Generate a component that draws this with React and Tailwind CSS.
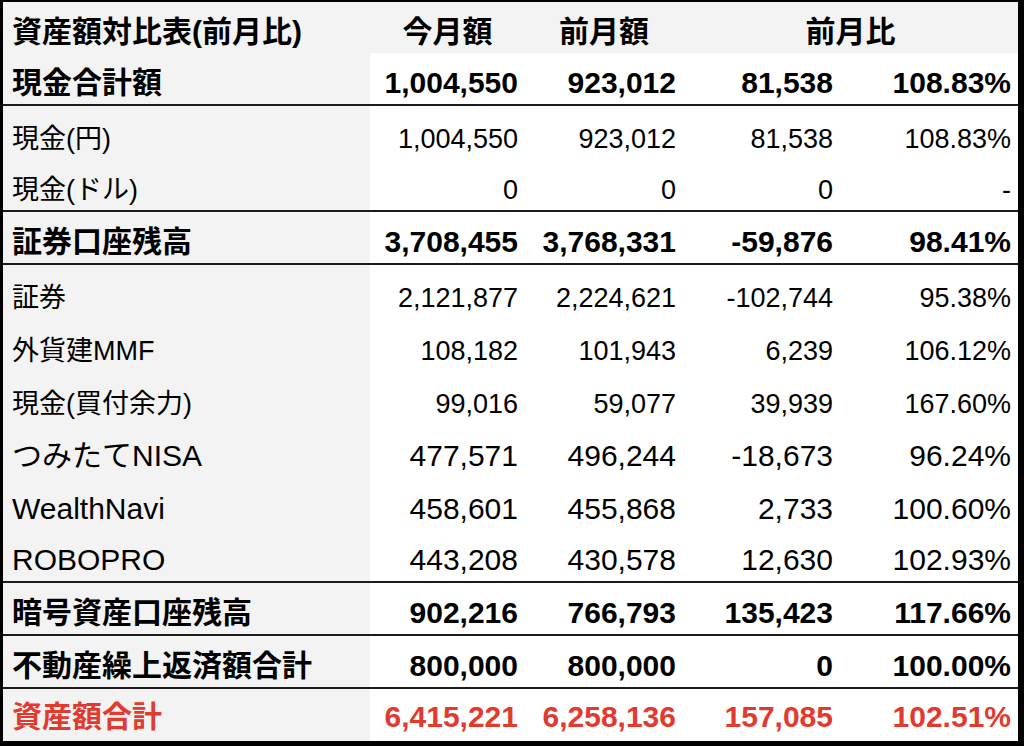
import React from "react";

// size: 27 for the small detail rows, 30 for the rest
const ROWS = [
  { label: "現金合計額", v: ["1,004,550", "923,012", "81,538", "108.83%"], bold: true, line: true },
  { label: "現金(円)", v: ["1,004,550", "923,012", "81,538", "108.83%"], small: true },
  { label: "現金(ドル)", v: ["0", "0", "0", "-"], small: true, line: true },
  { label: "証券口座残高", v: ["3,708,455", "3,768,331", "-59,876", "98.41%"], bold: true, line: true },
  { label: "証券", v: ["2,121,877", "2,224,621", "-102,744", "95.38%"], small: true },
  { label: "外貨建MMF", v: ["108,182", "101,943", "6,239", "106.12%"], small: true },
  { label: "現金(買付余力)", v: ["99,016", "59,077", "39,939", "167.60%"], small: true },
  { label: "つみたてNISA", v: ["477,571", "496,244", "-18,673", "96.24%"] },
  { label: "WealthNavi", v: ["458,601", "455,868", "2,733", "100.60%"] },
  { label: "ROBOPRO", v: ["443,208", "430,578", "12,630", "102.93%"], line: true },
  { label: "暗号資産口座残高", v: ["902,216", "766,793", "135,423", "117.66%"], bold: true, line: true },
  { label: "不動産繰上返済額合計", v: ["800,000", "800,000", "0", "100.00%"], bold: true, line: true },
  { label: "資産額合計", v: ["6,415,221", "6,258,136", "157,085", "102.51%"], bold: true, red: true, last: true },
];

const FONT = { fontFamily: '"Liberation Sans", "Noto Sans CJK JP", sans-serif' };
const COLS = "grid grid-cols-[367px_155px_158px_157px_178px]";

const Row = ({ row }) => {
  const text = row.red ? "text-[#e23a2e]" : "text-black";
  const size = row.small ? "text-[27px]" : "text-[30px]";
  const pad = row.last ? "pb-[9px]" : "pb-[6px]";
  return (
    <div
      className={`${COLS} ${row.last ? "h-[52px]" : "h-[53px]"} ${
        row.line ? "border-b-2 border-[#1c1c1c]" : ""
      } ${text} ${size} leading-none ${row.bold ? "font-bold" : "font-normal"}`}
    >
      <div className={`bg-[#f3f3f3] flex items-end pl-[9px] ${pad}`}>{row.label}</div>
      {row.v.map((val, i) => (
        <div key={i} className={`bg-white flex items-end justify-end pr-[7px] ${pad}`}>
          {val}
        </div>
      ))}
    </div>
  );
};

export default function App() {
  return (
    <div className="w-[1024px] h-[746px] bg-black overflow-hidden" style={FONT}>
      <div className="ml-[3px] mr-[6px] mt-[2px] flex flex-col">
        {/* header */}
        <div className={`${COLS} h-[51px] bg-[#f3f3f3] font-bold text-[30px] leading-none text-black`}>
          <div className="flex items-end pl-[9px] pb-[6px]">資産額対比表(前月比)</div>
          <div className="flex items-end justify-center pb-[6px]">今月額</div>
          <div className="flex items-end justify-center pb-[6px]">前月額</div>
          <div className="col-span-2 flex items-end justify-center pb-[6px]">前月比</div>
        </div>
        {ROWS.map((r) => (
          <Row key={r.label} row={r} />
        ))}
      </div>
    </div>
  );
}
